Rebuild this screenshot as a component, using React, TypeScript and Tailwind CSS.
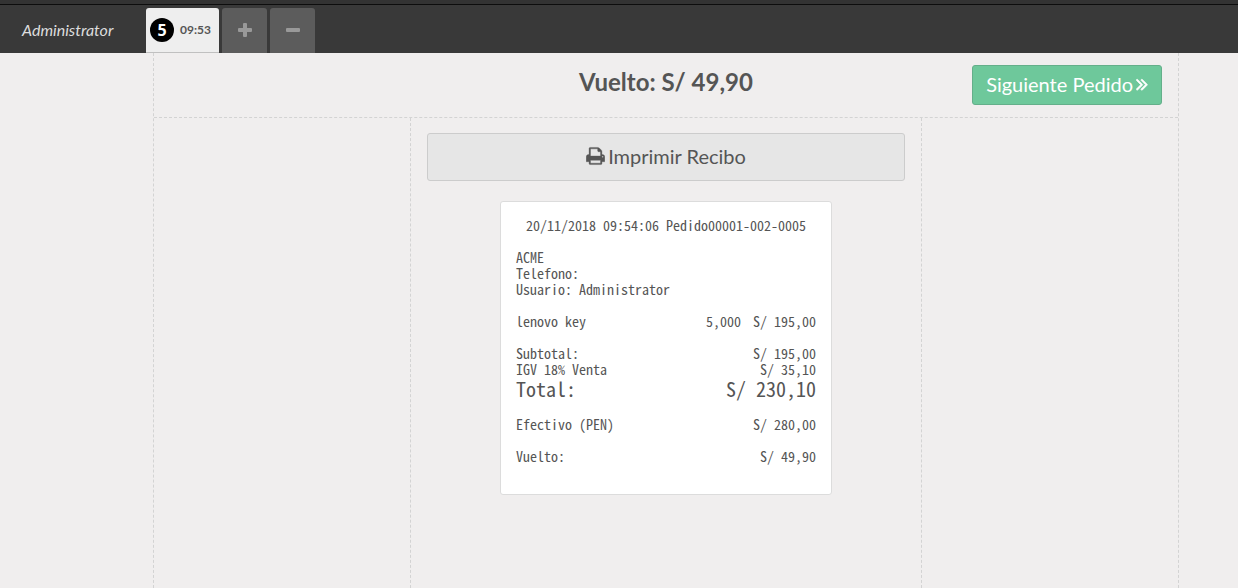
import type { ReactNode } from "react";

type Line = { label: string; value: string; big?: boolean; gap?: boolean };

const totals: Line[] = [
  { label: "Subtotal:", value: "S/ 195,00" },
  { label: "IGV 18% Venta", value: "S/ 35,10" },
  { label: "Total:", value: "S/ 230,10", big: true },
  { label: "Efectivo (PEN)", value: "S/ 280,00", gap: true },
  { label: "Vuelto:", value: "S/ 49,90", gap: true },
];

function PrintIcon() {
  return (
    <svg viewBox="0 0 1664 1792" className="h-5 w-[19px]" fill="currentColor" stroke="currentColor" strokeWidth="30" aria-hidden="true">
      <path d="M384 1536h896v-256h-896v256zM384 896h896v-384h-160q-40 0-68-28t-28-68v-160h-640v640zM1536 960q0-26-19-45t-45-19-45 19-19 45 19 45 45 19 45-19 19-45zM1664 960v416q0 13-9.5 22.5t-22.5 9.5h-224v160q0 40-28 68t-68 28h-960q-40 0-68-28t-28-68v-160h-224q-13 0-22.5-9.5t-9.5-22.5v-416q0-79 56.5-135.5t135.5-56.5h64v-544q0-40 28-68t68-28h672q40 0 88 20t76 48l152 152q28 28 48 76t20 88v256h64q79 0 135.5 56.5t56.5 135.5z" />
    </svg>
  );
}

function NextIcon() {
  return (
    <svg viewBox="0 0 1064 1792" className="h-5 w-3" fill="currentColor" stroke="currentColor" strokeWidth="60" aria-hidden="true">
      <path d="M595 960q0 13-10 23l-466 466q-10 10-23 10t-23-10l-50-50q-10-10-10-23t10-23l393-393-393-393q-10-10-10-23t10-23l50-50q10-10 23-10t23 10l466 466q10 10 10 23zM1020 960q0 13-10 23l-466 466q-10 10-23 10t-23-10l-50-50q-10-10-10-23t10-23l393-393-393-393q-10-10-10-23t10-23l50-50q10-10 23-10t23 10l466 466q10 10 10 23z" />
    </svg>
  );
}

function PlusIcon() {
  return (
    <svg viewBox="0 0 14 14" className="h-[14px] w-[14px]" fill="currentColor" aria-hidden="true">
      <path d="M6 0h2a1 1 0 0 1 1 1v4h4a1 1 0 0 1 1 1v2a1 1 0 0 1-1 1H9v4a1 1 0 0 1-1 1H6a1 1 0 0 1-1-1V9H1a1 1 0 0 1-1-1V6a1 1 0 0 1 1-1h4V1a1 1 0 0 1 1-1z" />
    </svg>
  );
}

function MinusIcon() {
  return (
    <svg viewBox="0 0 14 14" className="h-[14px] w-[14px]" fill="currentColor" aria-hidden="true">
      <rect x="0" y="5" width="14" height="4" rx="1" />
    </svg>
  );
}

function OrderButton({ label, children }: { label: string; children: ReactNode }) {
  return (
    <button
      type="button"
      aria-label={label}
      className="flex h-[45px] w-[45px] items-center justify-center rounded-t-[3px] bg-[#5c5c5c] pb-px text-[#999999]"
    >
      {children}
    </button>
  );
}

function TopBar() {
  return (
    <header className="bg-[#393939]">
      <div className="h-[5px] border-b border-[#0d0d0d] bg-[#333333]" />
      <div className="flex h-12 items-end">
        <span className="w-[146px] shrink-0 self-center pl-[22px] pt-[2px] text-base italic leading-6 text-[#dddddd]">
          Administrator
        </span>
        <div className="flex items-end gap-[3px]">
          <button
            type="button"
            className="flex h-[45px] w-[73px] items-center gap-[6px] rounded-t-[3px] border-b border-[#c0c0c0] bg-[#eeeeee] pl-1 text-xs font-bold text-[#555555]"
          >
            <span className="flex h-6 w-6 items-center justify-center rounded-full bg-black font-['Open_Sans',sans-serif] text-base text-white">
              5
            </span>
            <span>09:53</span>
          </button>
          <OrderButton label="Nuevo pedido">
            <PlusIcon />
          </OrderButton>
          <OrderButton label="Eliminar pedido">
            <MinusIcon />
          </OrderButton>
        </div>
      </div>
    </header>
  );
}

function Receipt() {
  return (
    <article className="mt-5 w-full max-w-[332px] rounded-[3px] border border-[#dcdcdc] bg-white px-[15px] pb-[30px] pt-[15px] font-['Noto_Sans_Mono_CJK_SC','Liberation_Mono',monospace] text-sm leading-4 text-[#555555]">
      <p className="text-center">20/11/2018 09:54:06 Pedido00001-002-0005</p>
      <p className="mt-4">ACME</p>
      <p>Telefono:</p>
      <p>Usuario: Administrator</p>
      <table className="mt-4 w-full">
        <tbody>
          <tr>
            <td className="w-1/2 p-0">lenovo key</td>
            <td className="p-0 text-right">5,000</td>
            <td className="w-[75px] p-0 text-right">S/ 195,00</td>
          </tr>
        </tbody>
      </table>
      <table className="mt-4 w-full">
        <tbody>
          {totals.map((line) => (
            <tr key={line.label} className={line.big ? "text-xl leading-[23px]" : ""}>
              <td className={line.gap ? "p-0 pt-4" : "p-0"}>{line.label}</td>
              <td className={line.gap ? "p-0 pt-4 text-right" : "p-0 text-right"}>{line.value}</td>
            </tr>
          ))}
        </tbody>
      </table>
    </article>
  );
}

export default function App() {
  return (
    <div className="flex min-h-screen flex-col bg-[#f0eeee] font-[Lato,sans-serif] text-[#555555]">
      <TopBar />
      <main className="ml-[153px] flex w-[calc(100%-153px)] max-w-[1026px] grow flex-col border-x border-dashed border-[#d3d3d3]">
        <div className="grid h-[65px] grid-cols-[1fr_auto_1fr] items-center border-b border-dashed border-[#d3d3d3]">
          <h1 className="col-start-2 pb-[6px] text-2xl font-bold">Vuelto: S/ 49,90</h1>
          <button
            type="button"
            className="mr-4 flex h-10 items-center justify-center gap-[3px] justify-self-end rounded-[3px] border border-[#64af8a] bg-[#6ec89b] px-[13px] pb-[2px] text-xl text-white"
          >
            Siguiente Pedido
            <NextIcon />
          </button>
        </div>
        <div className="grid grow grid-cols-[1fr_2fr_1fr]">
          <section className="col-start-2 flex flex-col items-center border-x border-dashed border-[#d3d3d3] px-4 pb-8 pt-[15px]">
            <button
              type="button"
              className="flex h-12 w-full items-center justify-center gap-[3px] rounded-[3px] border border-[#cccccc] bg-[#e6e6e6] pb-[2px] text-xl"
            >
              <PrintIcon />
              Imprimir Recibo
            </button>
            <Receipt />
          </section>
        </div>
      </main>
    </div>
  );
}
